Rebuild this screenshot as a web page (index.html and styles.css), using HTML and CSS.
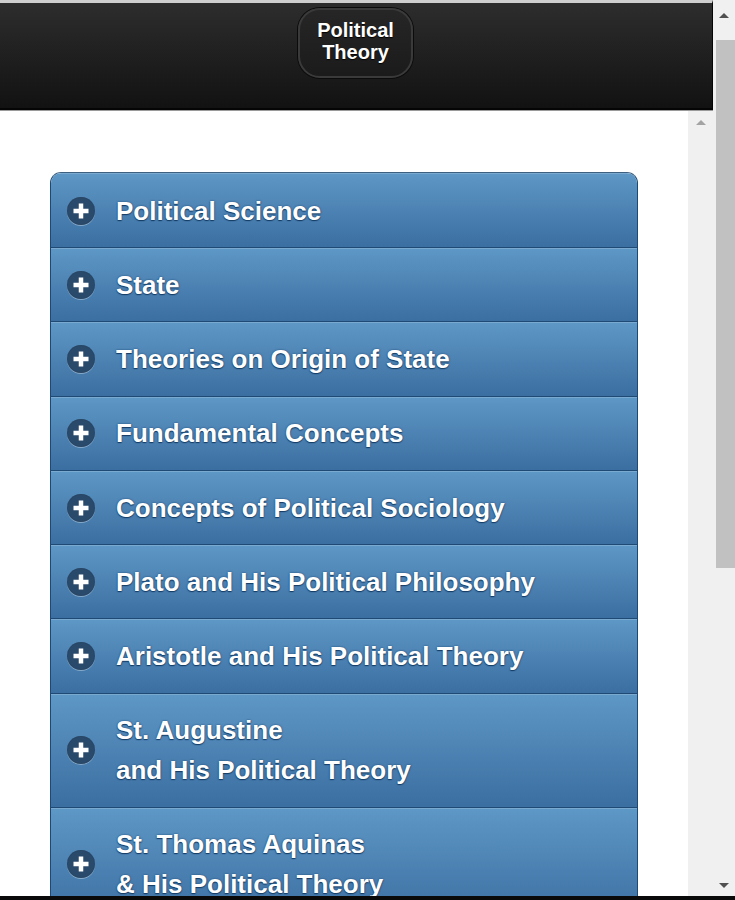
FILE: index.html
```html
<!DOCTYPE html>
<html lang="en">
<head>
<meta charset="utf-8">
<title>Political Theory</title>
<link rel="stylesheet" href="styles.css">
</head>
<body>
<div class="window">
  <div class="page">
    <header class="header">
      <div class="title-btn">Political<br>Theory</div>
    </header>
    <div class="viewport">
      <main class="content">
        <ul class="accordion">
          <li class="item"><span class="icon"><svg viewBox="0 0 28 28" width="28" height="28"><path d="M14 6.5v15M6.5 14h15" stroke="#fff" stroke-width="4.5"/></svg></span><span class="label">Political Science</span></li>
          <li class="item"><span class="icon"><svg viewBox="0 0 28 28" width="28" height="28"><path d="M14 6.5v15M6.5 14h15" stroke="#fff" stroke-width="4.5"/></svg></span><span class="label">State</span></li>
          <li class="item"><span class="icon"><svg viewBox="0 0 28 28" width="28" height="28"><path d="M14 6.5v15M6.5 14h15" stroke="#fff" stroke-width="4.5"/></svg></span><span class="label">Theories on Origin of State</span></li>
          <li class="item"><span class="icon"><svg viewBox="0 0 28 28" width="28" height="28"><path d="M14 6.5v15M6.5 14h15" stroke="#fff" stroke-width="4.5"/></svg></span><span class="label">Fundamental Concepts</span></li>
          <li class="item"><span class="icon"><svg viewBox="0 0 28 28" width="28" height="28"><path d="M14 6.5v15M6.5 14h15" stroke="#fff" stroke-width="4.5"/></svg></span><span class="label">Concepts of Political Sociology</span></li>
          <li class="item"><span class="icon"><svg viewBox="0 0 28 28" width="28" height="28"><path d="M14 6.5v15M6.5 14h15" stroke="#fff" stroke-width="4.5"/></svg></span><span class="label">Plato and His Political Philosophy</span></li>
          <li class="item"><span class="icon"><svg viewBox="0 0 28 28" width="28" height="28"><path d="M14 6.5v15M6.5 14h15" stroke="#fff" stroke-width="4.5"/></svg></span><span class="label">Aristotle and His Political Theory</span></li>
          <li class="item"><span class="icon"><svg viewBox="0 0 28 28" width="28" height="28"><path d="M14 6.5v15M6.5 14h15" stroke="#fff" stroke-width="4.5"/></svg></span><span class="label">St. Augustine<br>and His Political Theory</span></li>
          <li class="item"><span class="icon"><svg viewBox="0 0 28 28" width="28" height="28"><path d="M14 6.5v15M6.5 14h15" stroke="#fff" stroke-width="4.5"/></svg></span><span class="label">St. Thomas Aquinas<br>&amp; His Political Theory</span></li>
        </ul>
      </main>
      <div class="inner-scroll">
        <span class="arrow-up small"></span>
      </div>
    </div>
  </div>
  <div class="outer-scroll">
    <div class="os-btn"><span class="arrow-up"></span></div>
    <div class="os-thumb"></div>
    <div class="os-track"></div>
    <div class="os-btn bottom"><span class="arrow-down"></span></div>
  </div>
</div>
<div class="bottom-bar"></div>
</body>
</html>
```

FILE: styles.css
```css
html, body {
  margin: 0;
  padding: 0;
  height: 900px;
  overflow: hidden;
  background: #ffffff;
  font-family: "Liberation Sans", Arial, sans-serif;
}

body {
  display: flex;
  flex-direction: column;
}

.window {
  display: flex;
  height: 896px;
}

.bottom-bar {
  height: 4px;
  background: #0a0a0a;
}

.page {
  width: 713px;
  display: flex;
  flex-direction: column;
}

.header {
  height: 105px;
  border-top: 3px solid #cfcfcf;
  border-bottom: 2px solid #050505;
  border-right: 1px solid #050505;
  background: linear-gradient(#2d2d2d, #121212);
  display: flex;
  justify-content: center;
  align-items: flex-start;
  box-shadow: 0 1px 0 #9a9a9a;
}

.title-btn {
  margin-top: 5px;
  margin-left: -1px;
  padding: 9px 17px 13px;
  border-radius: 22px;
  border: 2px solid #3a3a3a;
  box-shadow: 0 0 0 1px #0b0b0b;
  background: linear-gradient(#262626, #1b1b1b);
  color: #ffffff;
  font-weight: bold;
  font-size: 20px;
  line-height: 22px;
  text-align: center;
  text-shadow: 0 1px 1px #000;
}

.viewport {
  flex: 1;
  display: flex;
  margin-top: 1px;
  min-height: 0;
}

.content {
  flex: 1;
  overflow: hidden;
  padding: 61px 50px 0;
}

.accordion {
  list-style: none;
  margin: 0;
  padding: 0;
  border-radius: 11px 11px 0 0;
  overflow: hidden;
  border: 1px solid #1d4a74;
  border-top-color: #3d5f80;
}

.item {
  display: flex;
  align-items: center;
  padding: 16.6px 0 16.65px;
  border-top: 1px solid #1f4a76;
  background: linear-gradient(#5e98c6, #3b6ea1);
  box-shadow: inset 0 1px 0 rgba(255, 255, 255, 0.18);
  color: #ffffff;
  font-weight: bold;
  font-size: 26px;
  line-height: 40px;
  text-shadow: 0 1px 1px #143b63, 0 0 2px #1a4470;
}

.item:first-child {
  border-top: none;
  padding-top: 17.6px;
}

.icon {
  width: 28px;
  height: 28px;
  margin-left: 16px;
  margin-right: 21px;
  border-radius: 50%;
  background: #2a4a6b;
  box-shadow: 0 1px 0 rgba(255, 255, 255, 0.35), inset 0 0 1px rgba(0,0,0,0.4);
  flex-shrink: 0;
  display: flex;
}

.label {
  display: block;
}

.inner-scroll {
  width: 25px;
  background: #f0f0f0;
  display: flex;
  justify-content: center;
  padding-top: 9px;
  box-sizing: border-box;
}

.arrow-up {
  width: 0;
  height: 0;
  border-left: 5px solid transparent;
  border-right: 5px solid transparent;
  border-bottom: 5px solid #505050;
}

.arrow-up.small {
  border-bottom-color: #a3a3a3;
}

.arrow-down {
  width: 0;
  height: 0;
  border-left: 5px solid transparent;
  border-right: 5px solid transparent;
  border-top: 5px solid #505050;
}

.outer-scroll {
  width: 22px;
  background: #f0f0f0;
  display: flex;
  flex-direction: column;
}

.os-btn {
  height: 40px;
  display: flex;
  justify-content: center;
  align-items: center;
  padding-bottom: 10px;
  box-sizing: border-box;
}

.os-btn.bottom {
  height: 24px;
  padding-bottom: 0;
  padding-top: 2px;
}

.os-thumb {
  height: 528px;
  margin-left: 3px;
  background: #c1c1c1;
}

.os-track {
  flex: 1;
}
```
